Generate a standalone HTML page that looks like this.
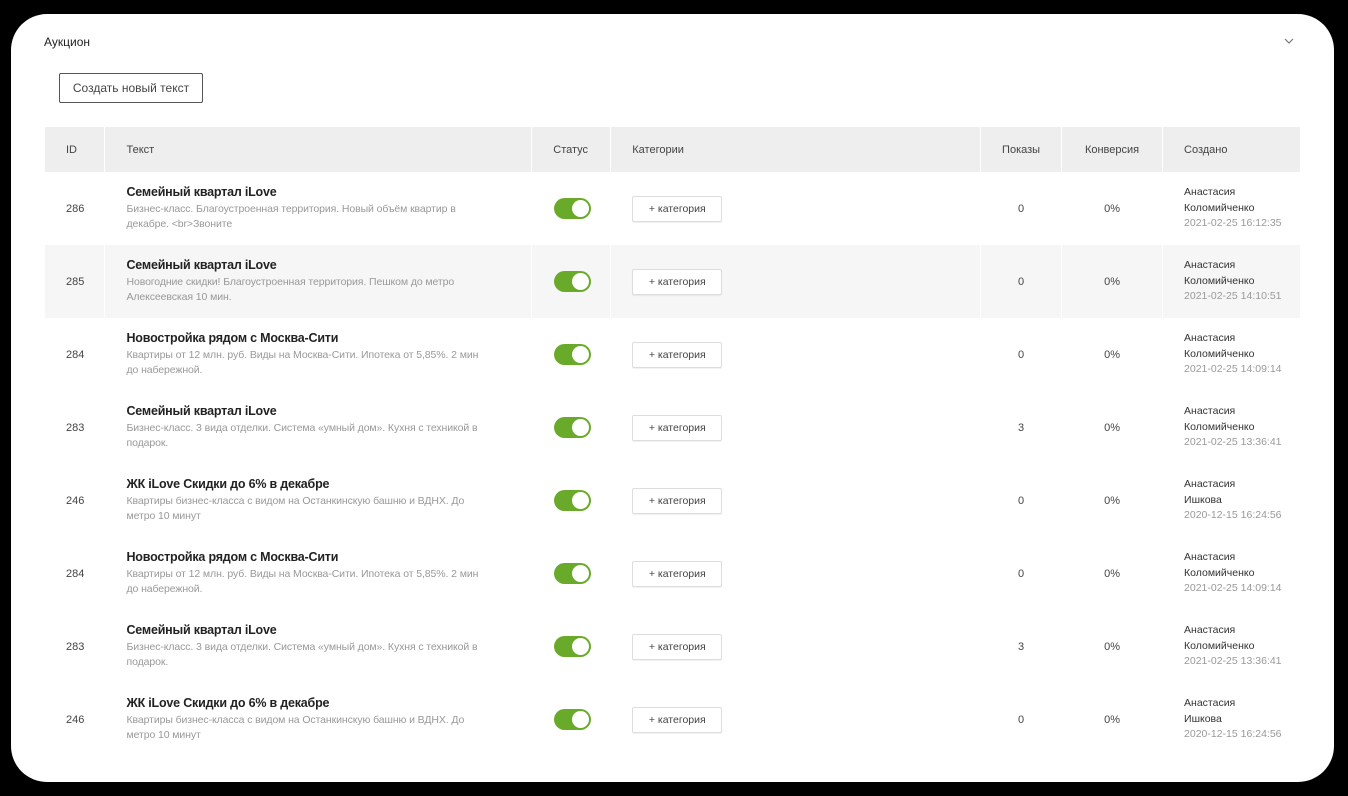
<!DOCTYPE html>
<html><head><meta charset="utf-8"><style>
*{box-sizing:border-box;margin:0;padding:0}
body{width:1348px;height:796px;background:#000;font-family:"Liberation Sans",sans-serif;position:relative;overflow:hidden}
.card{position:absolute;left:11px;top:14px;width:1323px;height:768px;background:#fff;border-radius:36px}
.title{position:absolute;left:44px;top:35px;font-size:12px;color:#222}
.chev{position:absolute;left:1283px;top:37px}
.btn{position:absolute;left:59px;top:73px;width:144px;height:30px;border:1px solid #555;border-radius:2px;font-size:12px;color:#444;text-align:center;line-height:28px}
table{position:absolute;left:45px;top:127px;width:1256px;border-collapse:collapse;font-size:11px;color:#444}
th{height:45px;background:#eee;font-weight:normal;text-align:left;border-right:1px solid #fff;padding-left:21px;color:#444}
td{height:73px;border-right:1px solid #fff;vertical-align:middle;padding-left:21px}
tr.g td{background:#f6f6f6}
.h{font-size:12.5px;font-weight:bold;color:#222;margin-bottom:3px;letter-spacing:-0.2px}
.d{color:#999;font-size:10.5px;line-height:15.5px;letter-spacing:-0.1px}
.tg{width:37px;height:21px;border-radius:11px;background:#6aaa2a;position:relative;margin-left:1px}
.tg:after{content:"";position:absolute;right:2px;top:2px;width:17px;height:17px;border-radius:50%;background:#fff}
.cat{width:90px;height:26px;border:1px solid #ddd;border-radius:2px;background:#fff;font-size:10.5px;text-align:center;line-height:24px;color:#444;box-shadow:0 1px 1px rgba(0,0,0,.06)}
.c{text-align:center;padding-left:0}
.cr{line-height:15.5px;font-size:10.5px;color:#333}
.cr span{color:#999}
</style></head><body>
<div class="card"></div>
<div class="title">Аукцион</div>
<svg class="chev" width="12" height="8" viewBox="0 0 12 8"><path d="M2 2l4 4 4-4" fill="none" stroke="#777" stroke-width="1.2"/></svg>
<div class="btn">Создать новый текст</div>
<table>
<colgroup><col style="width:60px"><col style="width:427px"><col style="width:79px"><col style="width:370px"><col style="width:81px"><col style="width:101px"><col style="width:138px"></colgroup>
<tr><th>ID</th><th>Текст</th><th>Статус</th><th>Категории</th><th style="text-align:center;padding:0">Показы</th><th style="text-align:center;padding:0">Конверсия</th><th>Создано</th></tr>
<tr><td>286</td><td><div class="h">Семейный квартал iLove</div><div class="d">Бизнес-класс. Благоустроенная территория. Новый объём квартир в<br>декабре. &lt;br&gt;Звоните</div></td><td><div class="tg"></div></td><td><div class="cat">+ категория</div></td><td class="c">0</td><td class="c">0%</td><td class="cr">Анастасия<br>Коломийченко<br><span>2021-02-25 16:12:35</span></td></tr>
<tr class="g"><td>285</td><td><div class="h">Семейный квартал iLove</div><div class="d">Новогодние скидки! Благоустроенная территория. Пешком до метро<br>Алексеевская 10 мин.</div></td><td><div class="tg"></div></td><td><div class="cat">+ категория</div></td><td class="c">0</td><td class="c">0%</td><td class="cr">Анастасия<br>Коломийченко<br><span>2021-02-25 14:10:51</span></td></tr>
<tr><td>284</td><td><div class="h">Новостройка рядом с Москва-Сити</div><div class="d">Квартиры от 12 млн. руб. Виды на Москва-Сити. Ипотека от 5,85%. 2 мин<br>до набережной.</div></td><td><div class="tg"></div></td><td><div class="cat">+ категория</div></td><td class="c">0</td><td class="c">0%</td><td class="cr">Анастасия<br>Коломийченко<br><span>2021-02-25 14:09:14</span></td></tr>
<tr><td>283</td><td><div class="h">Семейный квартал iLove</div><div class="d">Бизнес-класс. 3 вида отделки. Система «умный дом». Кухня с техникой в<br>подарок.</div></td><td><div class="tg"></div></td><td><div class="cat">+ категория</div></td><td class="c">3</td><td class="c">0%</td><td class="cr">Анастасия<br>Коломийченко<br><span>2021-02-25 13:36:41</span></td></tr>
<tr><td>246</td><td><div class="h">ЖК iLove Скидки до 6% в декабре</div><div class="d">Квартиры бизнес-класса с видом на Останкинскую башню и ВДНХ. До<br>метро 10 минут</div></td><td><div class="tg"></div></td><td><div class="cat">+ категория</div></td><td class="c">0</td><td class="c">0%</td><td class="cr">Анастасия<br>Ишкова<br><span>2020-12-15 16:24:56</span></td></tr>
<tr><td>284</td><td><div class="h">Новостройка рядом с Москва-Сити</div><div class="d">Квартиры от 12 млн. руб. Виды на Москва-Сити. Ипотека от 5,85%. 2 мин<br>до набережной.</div></td><td><div class="tg"></div></td><td><div class="cat">+ категория</div></td><td class="c">0</td><td class="c">0%</td><td class="cr">Анастасия<br>Коломийченко<br><span>2021-02-25 14:09:14</span></td></tr>
<tr><td>283</td><td><div class="h">Семейный квартал iLove</div><div class="d">Бизнес-класс. 3 вида отделки. Система «умный дом». Кухня с техникой в<br>подарок.</div></td><td><div class="tg"></div></td><td><div class="cat">+ категория</div></td><td class="c">3</td><td class="c">0%</td><td class="cr">Анастасия<br>Коломийченко<br><span>2021-02-25 13:36:41</span></td></tr>
<tr><td>246</td><td><div class="h">ЖК iLove Скидки до 6% в декабре</div><div class="d">Квартиры бизнес-класса с видом на Останкинскую башню и ВДНХ. До<br>метро 10 минут</div></td><td><div class="tg"></div></td><td><div class="cat">+ категория</div></td><td class="c">0</td><td class="c">0%</td><td class="cr">Анастасия<br>Ишкова<br><span>2020-12-15 16:24:56</span></td></tr>
</table>
</body></html>
